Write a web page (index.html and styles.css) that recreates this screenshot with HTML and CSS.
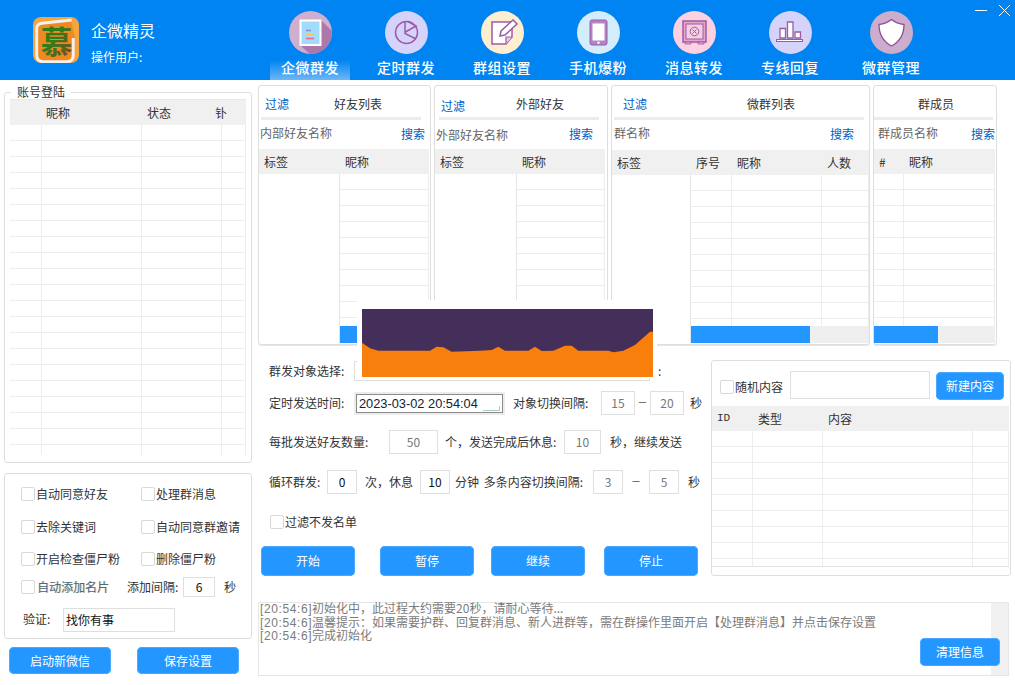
FILE: index.html
```html
<!DOCTYPE html>
<html lang="zh">
<head>
<meta charset="utf-8">
<title>企微精灵</title>
<link rel="stylesheet" href="styles.css">
</head>
<body>
<div class="app">
  <header class="top">
    <div class="brand">
      <svg class="logo" viewBox="0 0 46 46" width="46" height="46">
        <defs><linearGradient id="lg" x1="0" y1="0" x2="1" y2="1"><stop offset="0.45" stop-color="#2f7d1a"/><stop offset="0.75" stop-color="#6a5a20"/><stop offset="1" stop-color="#5b2f90"/></linearGradient></defs>
        <rect width="46" height="46" rx="8" fill="#f7a43e"/>
        <path d="M4 12 Q4 6 10 6 L38 3 L42 21 V38 Q42 45 34 45 H10 Q4 45 4 38Z" fill="#ee8a20"/>
        <path d="M38.7 3 L9 6.3 Q3.7 7 3.7 12 V38 Q3.7 44.7 10.3 44.7 H33.7 Q40.3 44.7 40.3 38 V21" fill="none" stroke="#f2f0ec" stroke-width="3"/>
        <text x="23.5" y="37" text-anchor="middle" class="logo-char" fill="url(#lg)">慕</text>
      </svg>
      <div class="brand-text">
        <div class="brand-name">企微精灵</div>
        <div class="brand-user">操作用户:</div>
      </div>
    </div>
    <nav class="nav">
      <a class="nav-item active">
        <svg viewBox="0 0 43 43" width="43" height="43"><defs><clipPath id="c1"><circle cx="21.5" cy="21.5" r="21.5"/></clipPath></defs><circle cx="21.5" cy="21.5" r="21.5" fill="#d0aece"/><path d="M32 9 L50 27 V50 H28 L11 34Z" fill="#ac78ac" clip-path="url(#c1)"/><rect x="11.5" y="9.5" width="20" height="24.5" fill="#a2dcfa" stroke="#fff" stroke-width="2"/><path d="M17 19.5h5" stroke="#8c8ce0" stroke-width="1.6"/><path d="M17 23.5h8" stroke="#f8c850" stroke-width="1.6"/><path d="M17 27.5h8" stroke="#f860a0" stroke-width="1.6"/></svg>
        <span>企微群发</span>
      </a>
      <a class="nav-item">
        <svg viewBox="0 0 43 43" width="43" height="43"><circle cx="21.5" cy="21.5" r="21.5" fill="#d6d3fb"/><circle cx="21.5" cy="21.5" r="11" fill="none" stroke="#9a5ca8" stroke-width="1.5"/><path d="M20 10.5 V22.5 L31 28 M20.5 21 L31 15 L23 10.5" fill="none" stroke="#9a5ca8" stroke-width="1.5"/></svg>
        <span>定时群发</span>
      </a>
      <a class="nav-item">
        <svg viewBox="0 0 43 43" width="43" height="43"><circle cx="21.5" cy="21.5" r="21.5" fill="#fdeecf"/><path d="M11 11 H31 V26 L25 33 H11Z" fill="#fff" stroke="#9a5ca8" stroke-width="1.5"/><path d="M25 33 V26 H31" fill="#e8c8e8" stroke="#9a5ca8" stroke-width="1.2"/><path d="M19 25 L20 20 L32 9 L36 13 L24 24Z" fill="#fff" stroke="#9a5ca8" stroke-width="1.5"/></svg>
        <span>群组设置</span>
      </a>
      <a class="nav-item">
        <svg viewBox="0 0 43 43" width="43" height="43"><circle cx="21.5" cy="21.5" r="21.5" fill="#d4edfc"/><rect x="13" y="9" width="17" height="25" rx="2" fill="#b184c4" stroke="#9a5ca8"/><rect x="15.5" y="12.5" width="12" height="17" fill="#fff"/><circle cx="21.5" cy="31.7" r="1.2" fill="#fff"/></svg>
        <span>手机爆粉</span>
      </a>
      <a class="nav-item">
        <svg viewBox="0 0 43 43" width="43" height="43"><circle cx="21.5" cy="21.5" r="21.5" fill="#fdd0e2"/><rect x="10" y="10" width="23" height="21" fill="#e6a6c8" stroke="#9a5ca8" stroke-width="1.5"/><rect x="13" y="13" width="17" height="15" fill="#f6cfe0" stroke="#9a5ca8"/><circle cx="21.5" cy="20.5" r="4.3" fill="none" stroke="#9a5ca8"/><path d="M19.5 18.5l4 4M23.5 18.5l-4 4" stroke="#9a5ca8"/><path d="M12 31h6v2h-6zM25 31h6v2h-6z" fill="#e6a6c8" stroke="#9a5ca8" stroke-width="0.8"/></svg>
        <span>消息转发</span>
      </a>
      <a class="nav-item">
        <svg viewBox="0 0 43 43" width="43" height="43"><circle cx="21.5" cy="21.5" r="21.5" fill="#d6d3fb"/><path d="M11 17.5h5.5v9.5H11zM18.5 11h5.5v16h-5.5zM26 21h5.5v6H26z" fill="#fff" stroke="#9a5ca8" stroke-width="1.3"/><rect x="7.5" y="28.5" width="26" height="2" fill="#fff" stroke="#9a5ca8"/></svg>
        <span>专线回复</span>
      </a>
      <a class="nav-item nav-last">
        <svg viewBox="0 0 43 43" width="43" height="43"><circle cx="21.5" cy="21.5" r="21.5" fill="#ccaecc"/><path d="M21.5 8.5 C17 12 13 13 9 13.5 C9 25 14 31 21.5 35 C29 31 34 25 34 13.5 C30 13 26 12 21.5 8.5Z" fill="#fff" stroke="#8e4f9e" stroke-width="1.3"/></svg>
        <span>微群管理</span>
      </a>
    </nav>
    <div class="winctl">
      <svg viewBox="0 0 36 14" width="36" height="14"><path d="M0 6.5H12" stroke="#fff"/><path d="M24 1L35 12M35 1L24 12" stroke="#fff"/></svg>
    </div>
  </header>

  <main class="main">
    <aside class="left">
      <fieldset class="account">
        <legend>账号登陆</legend>
        <div class="tbl acct-tbl">
          <div class="tbl-head">
            <div class="th c32"></div>
            <div class="th c100">昵称</div>
            <div class="th c73">状态</div>
            <div class="th acct-last">钋</div>
          </div>
          <div class="tbl-body">
            <div class="col c32"></div>
            <div class="col c100"></div>
            <div class="col c80"></div>
            <div class="col fill"></div>
          </div>
        </div>
      </fieldset>

      <section class="options">
        <div class="opt-row">
          <label class="check opt-a"><i class="box"></i>自动同意好友</label>
          <label class="check"><i class="box"></i>处理群消息</label>
        </div>
        <div class="opt-row">
          <label class="check opt-a"><i class="box"></i>去除关键词</label>
          <label class="check"><i class="box"></i>自动同意群邀请</label>
        </div>
        <div class="opt-row">
          <label class="check opt-a"><i class="box"></i>开启检查僵尸粉</label>
          <label class="check"><i class="box"></i>删除僵尸粉</label>
        </div>
        <div class="opt-row opt-row-short">
          <label class="check opt-b"><i class="box"></i><span class="fringe">自动添加名片</span></label>
          <span class="opt-label">添加间隔:</span>
          <span class="field f32 dark">6</span>
          <span class="opt-sec">秒</span>
        </div>
        <div class="opt-row opt-verify">
          <span class="verify-label">验证:</span>
          <span class="field verify-input">找你有事</span>
        </div>
      </section>

      <div class="left-btns">
        <button class="btn b102">启动新微信</button>
        <button class="btn b102">保存设置</button>
      </div>
    </aside>

    <div class="work">
      <div class="panels">
        <section class="panel p1">
          <div class="p-title"><a class="link">过滤</a><span class="p-name">好友列表</span></div>
          <div class="p-search"><span class="p-hint">内部好友名称</span><a class="link">搜索</a></div>
          <div class="tbl">
            <div class="tbl-head">
              <div class="th frozen">标签</div>
              <div class="th">昵称</div>
            </div>
            <div class="tbl-body">
              <div class="frozen-col"></div>
              <div class="scroll-area">
                <div class="rows"><div class="col fill"></div></div>
                <div class="scrollbar"><div class="thumb"></div></div>
              </div>
            </div>
          </div>
        </section>
        <section class="panel p2">
          <div class="p-title"><a class="link">过滤</a><span class="p-name">外部好友</span></div>
          <div class="p-search"><span class="p-hint">外部好友名称</span><a class="link">搜索</a></div>
          <div class="tbl">
            <div class="tbl-head">
              <div class="th frozen">标签</div>
              <div class="th">昵称</div>
            </div>
            <div class="tbl-body">
              <div class="frozen-col"></div>
              <div class="scroll-area">
                <div class="rows"><div class="col fill"></div></div>
                <div class="scrollbar"></div>
              </div>
            </div>
          </div>
        </section>
        <section class="panel p3">
          <div class="p-title"><a class="link">过滤</a><span class="p-name">微群列表</span></div>
          <div class="p-search"><span class="p-hint">群名称</span><a class="link">搜索</a></div>
          <div class="tbl">
            <div class="tbl-head">
              <div class="th frozen">标签</div>
              <div class="th c41">序号</div>
              <div class="th c90">昵称</div>
              <div class="th">人数</div>
            </div>
            <div class="tbl-body">
              <div class="frozen-col"></div>
              <div class="scroll-area">
                <div class="rows">
                  <div class="col c41"></div>
                  <div class="col c90"></div>
                  <div class="col fill"></div>
                </div>
                <div class="scrollbar"><div class="thumb"></div></div>
              </div>
            </div>
          </div>
        </section>
        <section class="panel p4">
          <div class="p-title"><span class="p-name">群成员</span></div>
          <div class="p-search"><span class="p-hint">群成员名称</span><a class="link">搜索</a></div>
          <div class="tbl">
            <div class="tbl-head">
              <div class="th c30">#</div>
              <div class="th">昵称</div>
            </div>
            <div class="tbl-body">
              <div class="scroll-area">
                <div class="rows">
                  <div class="col c30"></div>
                  <div class="col fill"></div>
                </div>
                <div class="scrollbar"><div class="thumb"></div></div>
              </div>
            </div>
          </div>
        </section>
      </div>

      <div class="mid">
        <section class="form">
          <div class="f-row r1">
            <span>群发对象选择:</span>
            <span class="field"></span>
            <span class="pad8">:</span>
          </div>
          <div class="f-row r2">
            <span>定时发送时间:</span>
            <span class="date"><span class="date-in">2023-03-02 20:54:04<i class="date-mark"></i></span></span>
            <span class="pad8">对象切换间隔:</span>
            <span class="field muted">15</span>
            <span class="dash">一</span>
            <span class="field muted">20</span>
            <span class="pad6">秒</span>
          </div>
          <div class="f-row r3">
            <span>每批发送好友数量:</span>
            <span class="field muted">50</span>
            <span class="pad7">个&#xFF0C;发送完成后休息:</span>
            <span class="field muted">10</span>
            <span class="pad9">秒&#xFF0C;继续发送</span>
          </div>
          <div class="f-row r4">
            <span>循环群发:</span>
            <span class="field dark">0</span>
            <span class="pad8">次&#xFF0C;休息</span>
            <span class="field dark">10</span>
            <span class="pad5 wide-space">分钟 多条内容切换间隔:</span>
            <span class="field muted">3</span>
            <span class="dash">一</span>
            <span class="field muted">5</span>
            <span class="pad9">秒</span>
          </div>
          <label class="check filter-check"><i class="box"></i>过滤不发名单</label>
          <div class="actions">
            <button class="btn b94">开始</button>
            <button class="btn b94 a2">暂停</button>
            <button class="btn b94 a3">继续</button>
            <button class="btn b94 a4">停止</button>
          </div>
        </section>

        <section class="content">
          <div class="content-top">
            <label class="check"><i class="box"></i>随机内容</label>
            <span class="field content-input"></span>
            <button class="btn content-btn">新建内容</button>
          </div>
          <div class="tbl content-tbl">
            <div class="tbl-head">
              <div class="th c41 id">ID</div>
              <div class="th c70">类型</div>
              <div class="th c150">内容</div>
              <div class="th"></div>
            </div>
            <div class="tbl-body">
              <div class="col c41"></div>
              <div class="col c70"></div>
              <div class="col c150"></div>
              <div class="col fill"></div>
            </div>
          </div>
        </section>
      </div>

      <section class="log">
        <div class="log-text">
          <div><span class="ts">[20:54:6]</span>初始化中&#xFF0C;此过程大约需要20秒&#xFF0C;请耐心等待...</div>
          <div><span class="ts">[20:54:6]</span>温馨提示&#xFF1A;如果需要护群、回复群消息、新人进群等&#xFF0C;需在群操作里面开启【处理群消息】并点击保存设置</div>
          <div><span class="ts">[20:54:6]</span>完成初始化</div>
        </div>
        <div class="log-scroll"></div>
        <button class="btn log-btn">清理信息</button>
      </section>
    </div>
  </main>

  <div class="splash">
    <svg viewBox="336 57 873 204" width="291" height="68" preserveAspectRatio="none">
      <rect x="336" y="57" width="873" height="204" fill="#432f5a"/>
      <path d="M336 158 L360 175 L385 182 L540 182 L560 170 L580 172 L605 185 L690 182 L725 180 L745 170 L765 182 L835 182 L855 170 L875 183 L910 182 L945 167 L965 167 L985 182 L1075 182 L1090 187 L1120 182 L1155 165 L1200 125 L1209 125 V261 H336Z" fill="#f97f0c"/>
    </svg>
  </div>
</div>
</body>
</html>
```

FILE: styles.css
```css
* { box-sizing: border-box; }
html, body { margin: 0; padding: 0; background: #fff; }
body { font: 12px/16px "Noto Sans CJK SC", "Liberation Sans", sans-serif; color: #333; }
.app { position: relative; width: 1015px; height: 685px; overflow: hidden; display: flex; flex-direction: column; background: #fff; }

/* header */
.top { position: relative; height: 80px; flex: none; background: #0084f1; display: flex; color: #fff; }
.brand { width: 270px; display: flex; padding: 17px 0 0 33px; }
.logo { flex: none; }
.logo-char { font: 700 32px "Noto Sans CJK SC", sans-serif; }
.brand-text { margin-left: 13px; padding-top: 2px; }
.brand-name { font-size: 16px; line-height: 22px; margin-left: -1px; }
.brand-user { font-size: 12px; line-height: 16px; margin: 8px 0 0 -1px; }
.nav { display: flex; gap: 16px; }
.nav-item { width: 80px; height: 80px; display: flex; flex-direction: column; align-items: center; padding-top: 11px; font-size: 14px; font-weight: 500; letter-spacing: 0.5px; }
.nav-item svg { display: block; flex: none; }
.nav-item span { margin-top: 3px; line-height: 20px; white-space: nowrap; }
.nav-item.active { background: linear-gradient(to bottom, rgba(255,255,255,0) 60px, rgba(255,255,255,0.42) 80px); }
.nav-last { margin-left: 5px; }
.winctl { position: absolute; top: 4px; left: 975px; line-height: 0; }

/* main areas */
.main { flex: 1; display: flex; padding-left: 4px; min-height: 0; }
.left { width: 248px; flex: none; padding-top: 5px; display: flex; flex-direction: column; }
.work { width: 757px; margin-left: 6px; flex: none; display: flex; flex-direction: column; padding-top: 5px; }

/* account group */
.account { margin: 0; height: 378px; padding: 0 5px 6px 5px; border: 1px solid #dedede; border-radius: 3px; min-width: 0; display: flex; }
.account legend { margin-left: 1px; padding: 0 6px; font-size: 12px; line-height: 14px; height: 14px; }
.acct-tbl { height: 356px; flex: none; width: 233px; border-top: 1px solid #e8e8e8; }
.acct-tbl .c100 { padding-left: 4px; }

/* tables */
.tbl { display: flex; flex-direction: column; flex: 1; min-height: 0; }
.tbl-head { height: 25px; flex: none; display: flex; background: #f0f0f0; line-height: 25px; color: #333; }
.tbl-body { flex: 1; min-height: 0; display: flex; background: #fff; }
.th { padding-left: 5px; white-space: nowrap; overflow: hidden; flex: 1; }
.col { background: repeating-linear-gradient(to bottom, #fff 0, #fff 15px, #ededed 15px, #ededed 16px); border-right: 1px solid #ededed; flex: none; }
.col.fill { flex: 1; }
.th.c30, .th.c32, .th.c41, .th.c70, .th.c73, .th.c90, .th.c100, .th.c150 { flex: none; }
.c30 { width: 30px; }
.c32 { width: 32px; }
.c41 { width: 41px; }
.c70 { width: 70px; }
.c73 { width: 73px; }
.c80 { width: 80px; }
.c90 { width: 90px; }
.c100 { width: 100px; }
.c150 { width: 150px; }
.acct-last { padding-left: 0; }
.scroll-area { flex: 1; min-width: 0; display: flex; flex-direction: column; }
.rows { flex: 1; min-height: 0; display: flex; }
.scrollbar { height: 17px; flex: none; background: #efefef; }
.thumb { height: 100%; background: #2396ff; }
.frozen-col { flex: none; background: #fff; border-right: 1px solid #e4e4e4; }

/* list panels */
.panels { display: flex; height: 260px; flex: none; gap: 3px; }
.panel { display: flex; flex-direction: column; height: 100%; border: 1px solid #dedede; border-radius: 3px; padding: 0 0 1px; flex: none; box-shadow: 0 1px 0 #e6e6e6; }
.link { color: #0060c0; }
.p-title { height: 34px; flex: none; display: flex; align-items: center; padding-top: 5px; border-bottom: 3px solid #ececec; }
.p-name { color: #333; }
.p-search { height: 29px; flex: none; display: flex; align-items: center; justify-content: space-between; }
.p-search .link { margin-top: -1px; }
.p-hint { color: #666; margin-top: -3px; }
.p1 { width: 173px; }
.p1 .p-title { margin: 0 9px 0 2px; padding-left: 4px; }
.p1 .p-name { margin-left: 45px; }
.p1 .p-search { padding: 0 5px 0 1px; }
.p1 .frozen, .p1 .frozen-col { width: 81px; flex: none; }
.p1 .tbl { margin: 0 1px 0 0; }
.p1 .thumb { width: 60px; }
.p2 { width: 174px; }
.p2 .p-title { margin: 0 8px 0 4px; padding-left: 2px; }
.p2 .p-title .link { margin-top: 3px; }
.p2 .p-name { margin-left: 51px; }
.p2 .p-search { padding: 0 14px 0 1px; }
.p2 .p-hint { margin-top: 0; }
.p2 .tbl { margin: 0 2px 0 0; }
.p2 .frozen, .p2 .frozen-col { width: 82px; flex: none; }
.p3 { width: 259px; }
.p3 .p-title { margin: 0 5px 0 2px; padding-left: 9px; }
.p3 .p-name { margin-left: 100px; }
.p3 .p-search { padding: 0 15px 0 2px; }
.p3 .tbl { margin: 1px 0 0; }
.p3 .frozen, .p3 .frozen-col { width: 79px; flex: none; }
.p3 .thumb { width: 119px; }
.p3 .th { flex: none; }
.p3 .th:last-child { flex: 1; }
.p4 { width: 124px; }
.p4 .p-title { padding-left: 44px; margin-right: 3px; }
.p4 .p-search { padding: 0 1px 0 4px; }
.p4 .tbl { margin: 0 1px 0 0; }
.p4 .thumb { width: 64px; }

/* fields */
.field { display: flex; align-items: center; justify-content: center; border: 1px solid #dfdfdf; background: #fff; height: 100%; color: #777; }
.field.dark { color: #111; }
.check { display: inline-flex; align-items: center; white-space: nowrap; color: #333; }
.box { display: block; width: 14px; height: 14px; border: 1px solid #d8d8d8; border-radius: 2px; background: #fff; margin-right: 1px; flex: none; }
.btn { display: block; border: 0; padding: 0; border-radius: 5px; background: #2396ff; color: #fff; font: inherit; font-size: 12px; box-shadow: inset 0 0 0 1px #4aa8ff; }

/* left options */
.options { height: 166px; flex: none; margin-top: 10px; border: 1px solid #dedede; border-radius: 3px; padding: 4px 0 0 16px; }
.opt-row { display: flex; align-items: center; height: 32.5px; }
.opt-a { width: 120px; }
.opt-row-short { height: 22px; }
.opt-b { width: 106px; }
.fringe { color: #3c6c90; text-shadow: 1px 0 0 rgba(240,150,60,0.55); margin-left: 1px; }
.opt-label { width: 56px; }
.f32 { width: 32px; height: 20px; }
.opt-sec { margin-left: 9px; }
.opt-verify { height: 24px; margin-top: 10px; padding-left: 2px; }
.verify-label { width: 40px; margin-top: -2px; }
.verify-input { width: 112px; justify-content: flex-start; color: #111; padding-left: 2px; }
.left-btns { display: flex; padding: 8px 0 0 5px; gap: 26px; }
.b102 { width: 102px; height: 27px; }

/* form */
.mid { display: flex; flex: none; height: 257px; padding-top: 15px; }
.form { width: 453px; flex: none; position: relative; }
.f-row { display: grid; align-items: center; white-space: nowrap; margin-left: 11px; }
.r1 { height: 20px; margin-top: 1px; grid-template-columns: 85px 296px auto; }
.r2 { height: 24px; margin-top: 10px; grid-template-columns: 85px 151px 96px 34px 15px 34px auto; }
.r3 { height: 24px; margin-top: 15px; grid-template-columns: 120px 49px 126px 37px auto; }
.r4 { height: 24px; margin-top: 16px; grid-template-columns: 58px 30px 63px 30px 143px 30px 26px 30px auto; }
.pad5 { padding-left: 5px; }
.pad6 { padding-left: 6px; }
.pad7 { padding-left: 7px; }
.pad8 { padding-left: 8px; }
.pad9 { padding-left: 9px; }
.wide-space { word-spacing: 2px; }
.dash { text-align: center; color: #333; font-size: 8px; }
.date { display: block; height: 23px; border: 2px solid #ececec; padding: 0; }
.date-in { position: relative; display: block; height: 100%; border: 1px solid #8a8a8a; padding-left: 2px; font: 12.8px/17px "Liberation Sans", sans-serif; color: #123; }
.date-mark { position: absolute; right: 2px; bottom: 1px; width: 17px; height: 5px; border: solid #a8cfc8; border-width: 0 1px 1px 0; }
.filter-check { display: flex; margin: 20px 0 0 12px; height: 16px; }
.actions { display: flex; margin: 16px 0 0 3px; }
.b94 { width: 94px; height: 30px; }
.a2 { margin-left: 25px; }
.a3 { margin-left: 17px; }
.a4 { margin-left: 19px; }

/* content box */
.content { width: 300px; height: 216px; margin-left: 0; flex: none; border: 1px solid #dedede; border-radius: 3px; padding: 0 1px 8px 0; display: flex; flex-direction: column; }
.content-top { height: 45px; flex: none; display: flex; align-items: center; padding: 5px 0 0 8px; }
.content-top .check { margin-top: 2px; }
.content-input { width: 140px; height: 28px; margin: -2px 0 0 7px; }
.content-btn { width: 68px; height: 28px; margin: -1px 0 0 6px; }
.content-tbl { border-bottom: 1px solid #e4e4e4; }
.content-tbl .th { padding-left: 5px; }
.th.id { font-family: "Liberation Mono", monospace; font-size: 11px; }

/* log */
.log { position: relative; flex: none; width: 751px; height: 74px; border: 1px solid #e6e6e6; display: flex; }
.log-text { flex: 1; min-width: 0; color: #7b7b7b; padding: 0 0 0 1px; line-height: 12.67px; white-space: nowrap; margin-top: -1px; }
.ts { font-family: "Liberation Sans", sans-serif; letter-spacing: 0.6px; }
.log-scroll { width: 17px; flex: none; background: #f0f0f0; }
.log-btn { position: absolute; left: 661px; top: 35px; width: 80px; height: 28px; }

/* splash that lies over the window */
.splash { position: absolute; left: 357px; top: 300px; width: 300px; height: 78px; background: #fff; padding: 9px 0 0 5px; line-height: 0; }
.splash svg { display: block; }
```
